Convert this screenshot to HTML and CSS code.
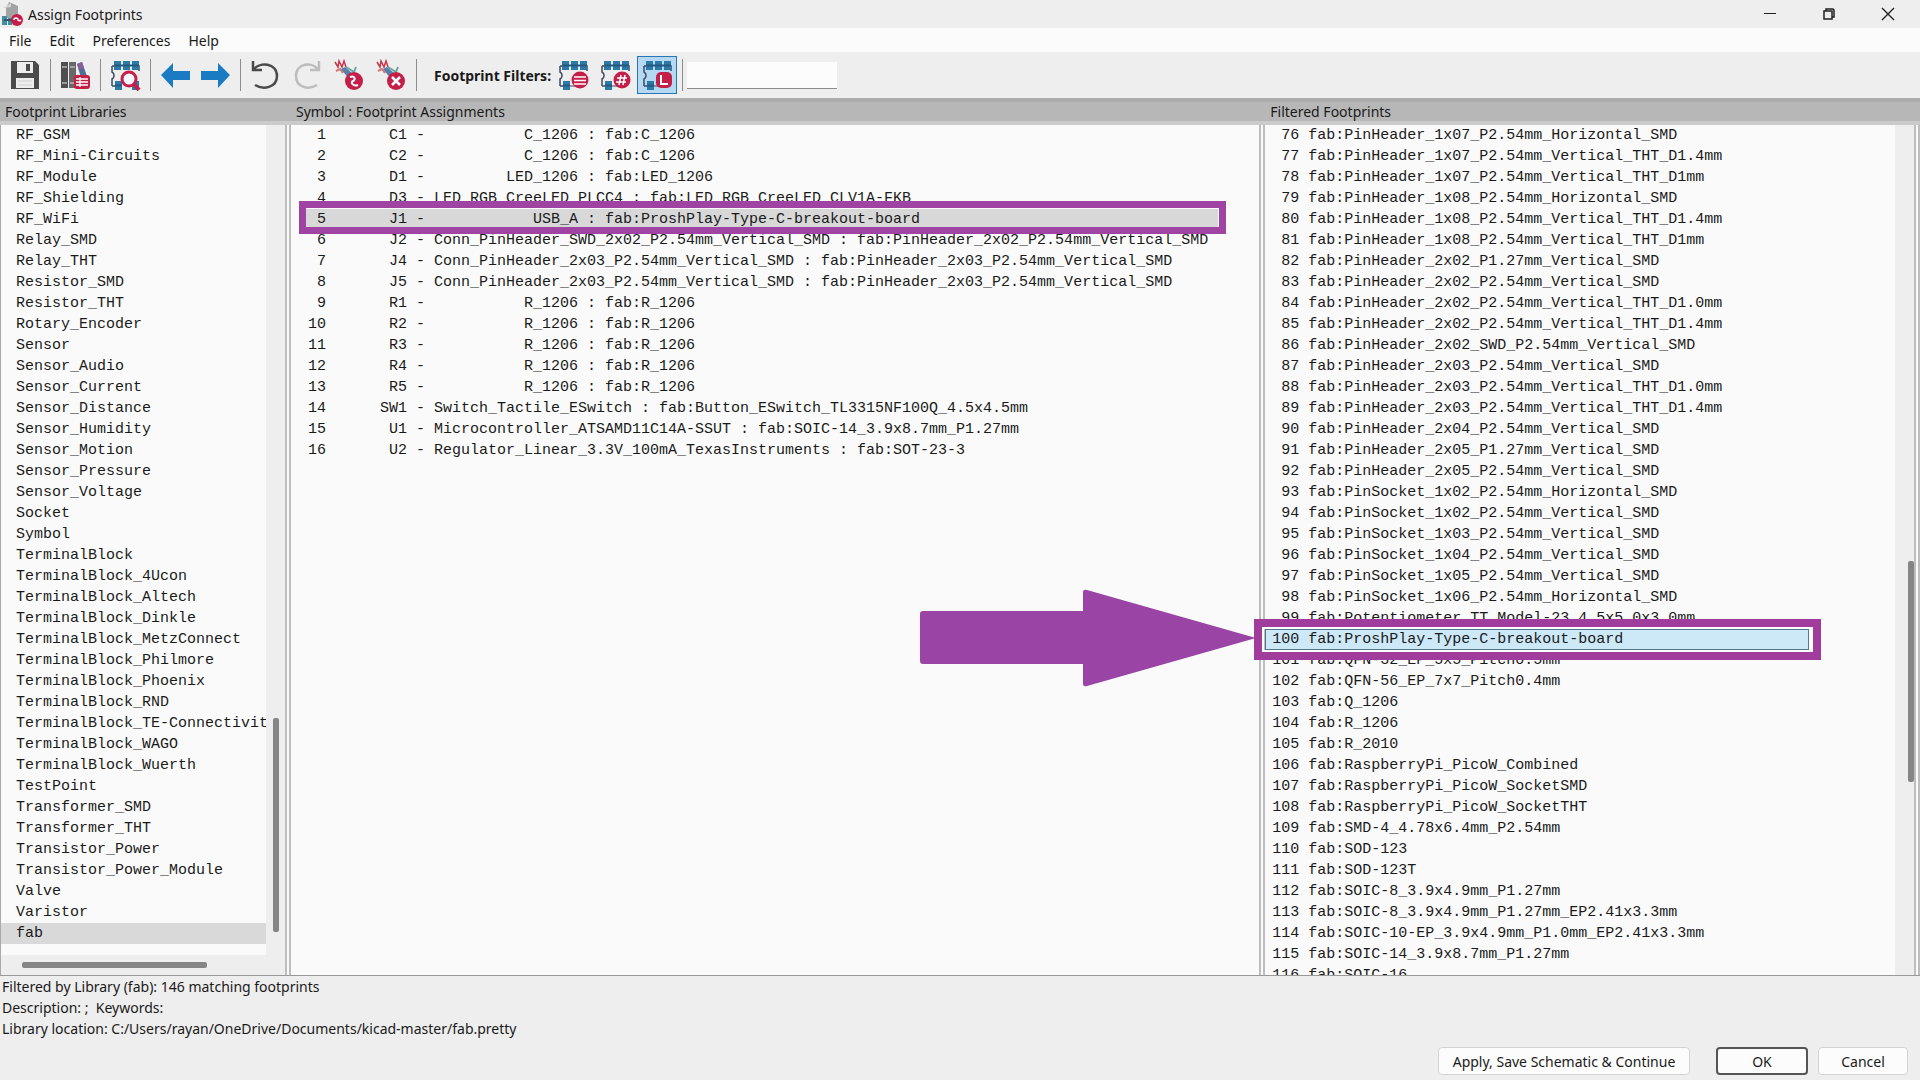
FILE: index.html
```html
<!DOCTYPE html>
<html lang="en">
<head>
<meta charset="utf-8">
<title>Assign Footprints</title>
<link rel="stylesheet" href="styles.css">
</head>
<body>
<svg class="defs" aria-hidden="true">
  <symbol id="chip" viewBox="0 0 32 32">
    <path d="M3 7v6a4 4 0 0 1 0 7v7M3 7h4M3 27h5M27 7h3v5" fill="none" stroke="#3f4a63" stroke-width="1.5"/>
    <path d="M5 2h7v9H5zM14 2h7v9h-7zM23 2h7v9h-7zM6 22h7v9H6z" fill="#2b7aa8"/>
    <path d="M5 6.500h25M6 26.500h7" stroke="#24587f" stroke-width="2"/>
  </symbol>
  <symbol id="pencil" viewBox="0 0 32 32">
    <path d="M2 3l3 5 1-6 3 6 2-6 2 6" fill="none" stroke="#c8364c" stroke-width="1.5"/>
    <path d="M3 12l4-2 3 4" fill="none" stroke="#d87878" stroke-width="2"/>
    <path d="M8 10l4-2 8 7-4 5z" fill="#5a7fa8"/>
    <path d="M13 8l8 5 2-5" fill="none" stroke="#6ba4a0" stroke-width="2"/>
    <circle cx="21" cy="22" r="9" fill="#c41f48"/>
  </symbol>
</svg>

<header class="titlebar">
  <svg class="app-icon" viewBox="0 0 24 24" aria-hidden="true">
    <path d="M9 0l9 4v12H6V6z" fill="#a3a3a3"/><path d="M3 6l8-5v4z" fill="#d4d4d4"/>
    <path d="M2 14h5v9H2zM8 16h4v7H8z" fill="#3f8ea1"/><path d="M4 18h9" stroke="#35546b" stroke-width="2"/>
    <circle cx="17" cy="18" r="6" fill="#c41f48"/><path d="M14 18a2 2 0 0 1 4 0 2 2 0 0 0 3 0" fill="none" stroke="#fff" stroke-width="1.5"/>
  </svg>
  <h1>Assign Footprints</h1>
  <div class="window-controls">
    <button aria-label="Minimize"><svg viewBox="0 0 14 14"><path d="M1 6.500h12" stroke="#222"/></svg></button>
    <button aria-label="Restore"><svg viewBox="0 0 14 14"><path d="M2 4h8v8H2zM4 4V2h7l1 1v7h-2" fill="none" stroke="#222" stroke-width="1.5"/></svg></button>
    <button aria-label="Close"><svg viewBox="0 0 14 14"><path d="M1 1l12 12M13 1L1 13" stroke="#222" stroke-width="1.400"/></svg></button>
  </div>
</header>

<nav class="menubar">
  <button>File</button><button>Edit</button><button>Preferences</button><button>Help</button>
</nav>

<div class="toolbar" role="toolbar">
  <div class="tools">
    <button aria-label="Save"><svg viewBox="0 0 32 32"><path d="M2 2h24l4 4v24H2z" fill="#4b4b4b"/><path d="M8 3h16v11H8z" fill="#ededed"/><path d="M17 5h4v7h-4z" fill="#4b4b4b"/><path d="M7 19h18v10H7z" fill="#ededed"/><path d="M9 22h14M9 26h14" stroke="#cfcfcf"/></svg></button>
  </div>
  <span class="sep"></span>
  <div class="tools">
    <button aria-label="Manage footprint libraries"><svg viewBox="0 0 32 32"><path d="M2 3h7v26H2z" fill="#4f4f4f"/><path d="M10 3h7v26h-7z" fill="#686868"/><path d="M3 8h5M11 8h5M3 24h5M11 24h5" stroke="#b8b8b8" stroke-width="1.5"/><path d="M18 5l5-2 7 20-6 3z" fill="#4e6f96"/><path d="M18 5l5-2 2 6-5 2z" fill="#8a5d9c"/><rect x="15" y="16" width="16" height="14" rx="3" fill="#c41f48"/><path d="M17 20h12M17 23h12M17 26h12M21 18v10" stroke="#fff" stroke-width="1.300"/></svg></button>
  </div>
  <span class="sep"></span>
  <div class="tools">
    <button aria-label="View selected footprint"><svg viewBox="0 0 32 32"><use href="#chip"/><path d="M23 22h7v9h-7z" fill="#2b7aa8"/><circle cx="20" cy="20" r="7" fill="#f3f6fa" stroke="#c41f48" stroke-width="3"/><path d="M25 25l5 6" stroke="#c41f48" stroke-width="4"/></svg></button>
  </div>
  <span class="sep"></span>
  <div class="tools">
    <button aria-label="Previous unassigned"><svg viewBox="0 0 32 32"><path d="M2 16L14 4v8h17v9H14v8z" fill="#1a7ac2"/></svg></button>
    <button aria-label="Next unassigned"><svg viewBox="0 0 32 32"><path d="M31 16L19 4v8H2v9h17v8z" fill="#1a7ac2"/></svg></button>
  </div>
  <span class="sep"></span>
  <div class="tools spaced">
    <button aria-label="Undo"><svg viewBox="0 0 32 32"><path d="M4 2v9h9M4 11C11 2 28 4 28 17c0 12-14 14-22 9" fill="none" stroke="#4b4b4b" stroke-width="2.500"/></svg></button>
    <button aria-label="Redo"><svg viewBox="0 0 32 32"><path d="M28 2v9h-9M28 11C21 2 5 4 5 17c0 12 13 14 21 9" fill="none" stroke="#bdbdbd" stroke-width="2.500"/></svg></button>
    <button aria-label="Auto-assign footprints"><svg viewBox="0 0 32 32"><use href="#pencil"/><path d="M17 18c5-2 6 3 3 4s0 6 5 4" fill="none" stroke="#fff" stroke-width="2"/></svg></button>
    <button aria-label="Delete all assignments"><svg viewBox="0 0 32 32"><use href="#pencil"/><path d="M17 18l8 8M25 18l-8 8" stroke="#fff" stroke-width="2.500"/></svg></button>
  </div>
  <span class="sep"></span>
  <label class="filter-label" for="filter">Footprint Filters:</label>
  <div class="tools spaced">
    <button aria-label="Filter by symbol filters"><svg viewBox="0 0 32 32"><use href="#chip"/><path d="M12 27h10" stroke="#3f4a63"/><circle cx="23" cy="21" r="8.500" fill="#c41f48"/><path d="M17 18h12M17 21.500h12M17 25h12" stroke="#fff" stroke-width="1.500"/></svg></button>
    <button aria-label="Filter by pin count"><svg viewBox="0 0 32 32"><use href="#chip"/><path d="M12 27h10" stroke="#3f4a63"/><circle cx="23" cy="21" r="8.500" fill="#c41f48"/><path d="M22 16l-2 10M26 16l-2 10M18 19h10M17 23h10" stroke="#fff" stroke-width="1.500"/></svg></button>
    <button class="pressed" aria-pressed="true" aria-label="Filter by library"><svg viewBox="0 0 32 32"><use href="#chip"/><path d="M12 27h10" stroke="#3f4a63"/><rect x="15" y="13" width="16" height="16" rx="5" fill="#c41f48"/><path d="M20 16v9h7" fill="none" stroke="#fff" stroke-width="2"/></svg></button>
  </div>
  <span class="sep"></span>
  <input id="filter" class="filter" type="text">
</div>

<main class="panes">
  <section class="pane">
    <h2>Footprint Libraries</h2>
    <div class="pane-body">
      <div class="view">
        <ul class="list libraries" role="listbox" aria-label="Footprint Libraries">
          <li>RF_GSM</li><li>RF_Mini-Circuits</li><li>RF_Module</li><li>RF_Shielding</li><li>RF_WiFi</li>
          <li>Relay_SMD</li><li>Relay_THT</li><li>Resistor_SMD</li><li>Resistor_THT</li><li>Rotary_Encoder</li>
          <li>Sensor</li><li>Sensor_Audio</li><li>Sensor_Current</li><li>Sensor_Distance</li><li>Sensor_Humidity</li>
          <li>Sensor_Motion</li><li>Sensor_Pressure</li><li>Sensor_Voltage</li><li>Socket</li><li>Symbol</li>
          <li>TerminalBlock</li><li>TerminalBlock_4Ucon</li><li>TerminalBlock_Altech</li><li>TerminalBlock_Dinkle</li>
          <li>TerminalBlock_MetzConnect</li><li>TerminalBlock_Philmore</li><li>TerminalBlock_Phoenix</li>
          <li>TerminalBlock_RND</li><li>TerminalBlock_TE-Connectivit</li><li>TerminalBlock_WAGO</li>
          <li>TerminalBlock_Wuerth</li><li>TestPoint</li><li>Transformer_SMD</li><li>Transformer_THT</li>
          <li>Transistor_Power</li><li>Transistor_Power_Module</li><li>Valve</li><li>Varistor</li>
          <li class="current">fab</li>
        </ul>
        <div class="hscroll"><span class="spring before"></span><span class="hthumb"></span><span class="spring after"></span></div>
      </div>
      <div class="vscroll low"><span class="spring before"></span><span class="vthumb"></span><span class="spring after"></span></div>
    </div>
  </section>

  <section class="pane">
    <h2>Symbol : Footprint Assignments</h2>
    <div class="pane-body">
      <ul class="list assignments" role="listbox" aria-label="Symbol : Footprint Assignments">
        <li>  1       C1 -           C_1206 : fab:C_1206</li>
        <li>  2       C2 -           C_1206 : fab:C_1206</li>
        <li>  3       D1 -         LED_1206 : fab:LED_1206</li>
        <li>  4       D3 - LED_RGB_CreeLED_PLCC4 : fab:LED_RGB_CreeLED_CLV1A-FKB</li>
        <li class="marked">  5       J1 -            USB_A : fab:ProshPlay-Type-C-breakout-board</li>
        <li>  6       J2 - Conn_PinHeader_SWD_2x02_P2.54mm_Vertical_SMD : fab:PinHeader_2x02_P2.54mm_Vertical_SMD</li>
        <li>  7       J4 - Conn_PinHeader_2x03_P2.54mm_Vertical_SMD : fab:PinHeader_2x03_P2.54mm_Vertical_SMD</li>
        <li>  8       J5 - Conn_PinHeader_2x03_P2.54mm_Vertical_SMD : fab:PinHeader_2x03_P2.54mm_Vertical_SMD</li>
        <li>  9       R1 -           R_1206 : fab:R_1206</li>
        <li> 10       R2 -           R_1206 : fab:R_1206</li>
        <li> 11       R3 -           R_1206 : fab:R_1206</li>
        <li> 12       R4 -           R_1206 : fab:R_1206</li>
        <li> 13       R5 -           R_1206 : fab:R_1206</li>
        <li> 14      SW1 - Switch_Tactile_ESwitch : fab:Button_ESwitch_TL3315NF100Q_4.5x4.5mm</li>
        <li> 15       U1 - Microcontroller_ATSAMD11C14A-SSUT : fab:SOIC-14_3.9x8.7mm_P1.27mm</li>
        <li> 16       U2 - Regulator_Linear_3.3V_100mA_TexasInstruments : fab:SOT-23-3</li>
      </ul>
    </div>
  </section>

  <section class="pane">
    <h2>Filtered Footprints</h2>
    <div class="pane-body">
      <ul class="list footprints" role="listbox" aria-label="Filtered Footprints">
        <li> 76 fab:PinHeader_1x07_P2.54mm_Horizontal_SMD</li>
        <li> 77 fab:PinHeader_1x07_P2.54mm_Vertical_THT_D1.4mm</li>
        <li> 78 fab:PinHeader_1x07_P2.54mm_Vertical_THT_D1mm</li>
        <li> 79 fab:PinHeader_1x08_P2.54mm_Horizontal_SMD</li>
        <li> 80 fab:PinHeader_1x08_P2.54mm_Vertical_THT_D1.4mm</li>
        <li> 81 fab:PinHeader_1x08_P2.54mm_Vertical_THT_D1mm</li>
        <li> 82 fab:PinHeader_2x02_P1.27mm_Vertical_SMD</li>
        <li> 83 fab:PinHeader_2x02_P2.54mm_Vertical_SMD</li>
        <li> 84 fab:PinHeader_2x02_P2.54mm_Vertical_THT_D1.0mm</li>
        <li> 85 fab:PinHeader_2x02_P2.54mm_Vertical_THT_D1.4mm</li>
        <li> 86 fab:PinHeader_2x02_SWD_P2.54mm_Vertical_SMD</li>
        <li> 87 fab:PinHeader_2x03_P2.54mm_Vertical_SMD</li>
        <li> 88 fab:PinHeader_2x03_P2.54mm_Vertical_THT_D1.0mm</li>
        <li> 89 fab:PinHeader_2x03_P2.54mm_Vertical_THT_D1.4mm</li>
        <li> 90 fab:PinHeader_2x04_P2.54mm_Vertical_SMD</li>
        <li> 91 fab:PinHeader_2x05_P1.27mm_Vertical_SMD</li>
        <li> 92 fab:PinHeader_2x05_P2.54mm_Vertical_SMD</li>
        <li> 93 fab:PinSocket_1x02_P2.54mm_Horizontal_SMD</li>
        <li> 94 fab:PinSocket_1x02_P2.54mm_Vertical_SMD</li>
        <li> 95 fab:PinSocket_1x03_P2.54mm_Vertical_SMD</li>
        <li> 96 fab:PinSocket_1x04_P2.54mm_Vertical_SMD</li>
        <li> 97 fab:PinSocket_1x05_P2.54mm_Vertical_SMD</li>
        <li> 98 fab:PinSocket_1x06_P2.54mm_Horizontal_SMD</li>
        <li> 99 fab:Potentiometer_TT_Model-23_4.5x5.0x3.0mm</li>
        <li class="marked">100 fab:ProshPlay-Type-C-breakout-board<svg class="arrow" viewBox="0 0 336 98" aria-hidden="true"><path d="M3 22H163V3Q163 0 167 1L336 49 167 97Q163 98 163 95V75H3Q0 75 0 72V25Q0 22 3 22z" fill="#9a44a6"/></svg></li>
        <li>101 fab:QFN-32_EP_5x5_Pitch0.5mm</li>
        <li>102 fab:QFN-56_EP_7x7_Pitch0.4mm</li>
        <li>103 fab:Q_1206</li>
        <li>104 fab:R_1206</li>
        <li>105 fab:R_2010</li>
        <li>106 fab:RaspberryPi_PicoW_Combined</li>
        <li>107 fab:RaspberryPi_PicoW_SocketSMD</li>
        <li>108 fab:RaspberryPi_PicoW_SocketTHT</li>
        <li>109 fab:SMD-4_4.78x6.4mm_P2.54mm</li>
        <li>110 fab:SOD-123</li>
        <li>111 fab:SOD-123T</li>
        <li>112 fab:SOIC-8_3.9x4.9mm_P1.27mm</li>
        <li>113 fab:SOIC-8_3.9x4.9mm_P1.27mm_EP2.41x3.3mm</li>
        <li>114 fab:SOIC-10-EP_3.9x4.9mm_P1.0mm_EP2.41x3.3mm</li>
        <li>115 fab:SOIC-14_3.9x8.7mm_P1.27mm</li>
        <li>116 fab:SOIC-16</li>
      </ul>
      <div class="vscroll mid"><span class="spring before"></span><span class="vthumb"></span><span class="spring after"></span></div>
    </div>
  </section>
</main>

<footer class="footer">
  <p>Filtered by Library (fab): 146 matching footprints</p>
  <p>Description: ;&nbsp; Keywords:</p>
  <p>Library location: C:/Users/rayan/OneDrive/Documents/kicad-master/fab.pretty</p>
  <div class="actions">
    <button class="wide">Apply, Save Schematic &amp; Continue</button>
    <button class="default">OK</button>
    <button>Cancel</button>
  </div>
</footer>
</body>
</html>
```
FILE: styles.css
```css
* { box-sizing: border-box; }

body {
  margin: 0;
  height: 100vh;
  display: flex;
  flex-direction: column;
  overflow: hidden;
  background: #eee;
  color: #1a1a1a;
  font: 14px/21px "Noto Sans", sans-serif;
}

h1, h2, p, ul { margin: 0; padding: 0; font-size: 14px; font-weight: 400; }
button, input { font: inherit; color: inherit; }
button { padding: 0; border: 0; background: none; }
.defs { display: none; }

.titlebar { display: flex; align-items: center; height: 28px; flex: none; }
.app-icon { width: 24px; height: 24px; margin-right: 4px; }
.window-controls { display: flex; margin-left: auto; padding-right: 3px; }
.window-controls button { width: 59px; height: 28px; }
.window-controls svg { width: 14px; height: 14px; display: block; margin: 0 auto; }

.menubar {
  display: flex;
  gap: 18px;
  flex: none;
  height: 24px;
  padding-left: 9px;
  padding-top: 1px;
  background: #fbfbfb;
}

.toolbar {
  display: flex;
  align-items: center;
  flex: none;
  height: 46px;
  padding-left: 5px;
}
.tools { display: flex; }
.tools.spaced { gap: 2px; }
.tools button { width: 40px; height: 38px; }
.tools svg { width: 32px; height: 32px; display: block; margin: 0 auto; }
.tools .pressed { background: #b5d9f2; border: 1px solid #2a76b4; }
.sep { width: 10px; height: 32px; display: flex; justify-content: center; }
.sep::before { content: ""; width: 1px; background: #8c8c8c; }
.filter-label { padding-left: 13px; width: 132px; font-weight: 700; white-space: nowrap; }
.filter { width: 150px; height: 27px; border: 0; border-bottom: 1px solid #8c8c8c; background: #fcfcfc; }

.panes {
  flex: 1;
  min-height: 0;
  display: grid;
  grid-template-columns: 291px minmax(0, 1fr) 34.1%;
  grid-template-rows: minmax(0, 1fr);
  border-bottom: 1px solid #999;
}
.pane { display: flex; flex-direction: column; min-height: 0; }
.pane h2 {
  flex: none;
  height: 27px;
  padding-left: 5px;
  line-height: 19px;
  background: #b7b7b7;
  border-top: 4px solid #acacac;
  border-bottom: 4px solid #cbcbcb;
}
.pane-body {
  flex: 1;
  min-height: 0;
  display: flex;
  background: #fafafa;
  border-right: 6px double #bdbdbd;
}
.pane:first-child .pane-body { border-left: 1px solid #aaa; }
.view { flex: 1; min-width: 0; display: flex; flex-direction: column; }

.list {
  flex: 1;
  min-width: 0;
  min-height: 0;
  list-style: none;
  isolation: isolate;
  font: 15px/21px "Liberation Mono", monospace;
}
.list li { height: 21px; white-space: pre; }
.libraries { overflow: hidden; }
.libraries li { padding-left: 15px; }
.libraries .current { background: #d9d9d9; }
.footprints { overflow-x: visible; overflow-y: clip; }
.assignments li { padding-left: 8px; }
.footprints li { padding-left: 7px; }

/* Annotated rows: tinted fill behind the text, frame over the neighbours */
.marked { position: relative; }
.marked::before { content: ""; position: absolute; z-index: -1; }
.marked::after { content: ""; position: absolute; }
.assignments .marked::before { inset: 0 41px 0 15px; background: #d8d8d8; }
.assignments .marked::after { inset: -8px 33px -4px 8px; border: 7px solid #a044a4; }
.footprints .marked::before { inset: 0 86px 0 0; background: #cde9f8; border: 1px solid #55788a; }
.footprints .marked::after {
  inset: -10px 74px -10px -11px;
  border: 8px solid #a03c9c;
  box-shadow: inset 0 0 0 2px #fff;
}
.arrow { position: absolute; right: 100%; top: -40px; width: 336px; height: 98px; margin-right: 9px; }

.vscroll { flex: none; width: 19px; display: flex; flex-direction: column; align-items: center; background: #eee; }
.vthumb { width: 6px; border-radius: 2px; background: #858585; }
.spring { flex: 1; }
.low .before { flex: 593; } .low .vthumb { flex: 214; } .low .after { flex: 43; }
.mid { align-items: flex-end; }
.mid .before { flex: 436; } .mid .vthumb { flex: 221; } .mid .after { flex: 193; }
.hscroll { flex: none; height: 20px; display: flex; align-items: center; background: #eee; }
.hthumb { height: 6px; border-radius: 2px; background: #858585; flex: 185; }
.hscroll .before { flex: 21; } .hscroll .after { flex: 59; }

.footer { flex: none; padding: 0 2px 5px; }
.actions { display: flex; justify-content: flex-end; gap: 10px; padding: 8px 10px 0 0; }
.actions button {
  width: 90px;
  height: 28px;
  border: 1px solid #d4d4d4;
  border-radius: 4px;
  background: #fcfcfc;
}
.actions .wide { width: 252px; margin-right: 16px; }
.actions .default { width: 92px; border: 2px solid #555; }
```
